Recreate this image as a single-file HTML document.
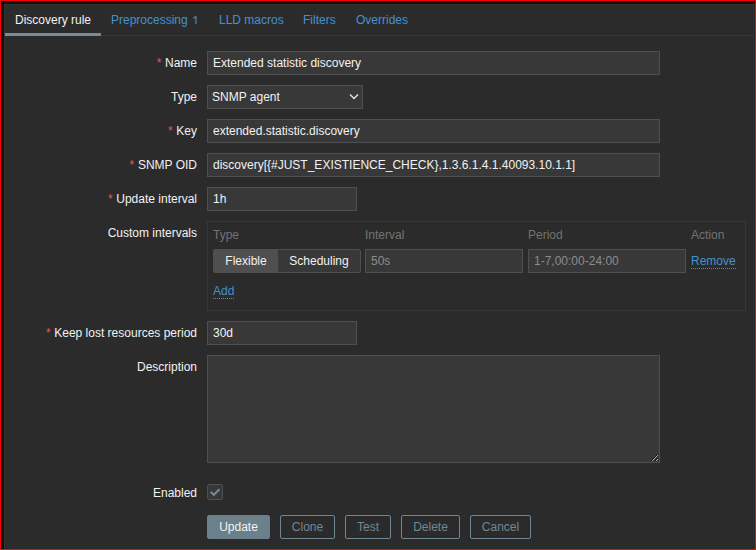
<!DOCTYPE html>
<html><head><meta charset="utf-8">
<style>
*{box-sizing:border-box}
html,body{margin:0;padding:0;width:756px;height:550px;overflow:hidden;background:#2b2b2b}
body{font-family:"Liberation Sans",sans-serif;font-size:12px;color:#f2f2f2;position:relative}
.a{position:absolute;white-space:nowrap}
.frame-r{position:absolute;left:0;top:0;width:756px;height:550px;border:1px solid #ff0000}
.lbl{position:absolute;right:559px;white-space:nowrap;line-height:14px}
.req::before{content:"*";color:#e45959;margin-right:3.6px;position:relative;top:0.4px}
.inp{position:absolute;left:207px;height:24px;background:#383838;border:1px solid #4f4f4f;padding:0 5px;line-height:22px;white-space:nowrap}
.tab{position:absolute;top:13px;line-height:14px;color:#4392cf}
.th{position:absolute;top:228px;line-height:14px;color:#737373}
.link{color:#4392cf;border-bottom:1px dotted #4392cf}
.btn{position:absolute;top:515px;height:24px;border:1px solid #6f8692;border-radius:2px;color:#718894;text-align:center;line-height:22px}
</style></head><body>
<div class="frame-r"></div>
<!-- top/left dark edges -->
<div class="a" style="left:1px;top:1px;width:754px;height:1px;background:#041214"></div>
<div class="a" style="left:1px;top:1px;width:1px;height:548px;background:#041214"></div>
<div class="a" style="left:2px;top:2px;width:753px;height:2px;background:#111"></div>
<div class="a" style="left:2px;top:2px;width:2px;height:547px;background:#111"></div>
<div class="a" style="left:4px;top:4px;width:751px;height:1px;background:#333"></div>
<div class="a" style="left:4px;top:4px;width:1px;height:545px;background:#333"></div>
<div class="a" style="left:754px;top:4px;width:1px;height:545px;background:#212e2e"></div>
<div class="a" style="left:4px;top:548px;width:751px;height:1px;background:#212e2e"></div>

<!-- tabs -->
<div class="a" style="left:5px;top:35px;width:749px;height:1px;background:#383838"></div>
<div class="a" style="left:5px;top:33px;width:96px;height:3px;background:#768d99"></div>
<div class="tab" style="left:15px;color:#f2f2f2">Discovery rule</div>
<div class="tab" style="left:111px">Preprocessing</div>
<svg class="a" style="left:192px;top:15px" width="6" height="10" viewBox="0 0 6 10"><path d="M3.9 1 V9" stroke="#5a86a8" stroke-width="1.2" fill="none"/><path d="M1.3 3.5 L3.9 1.3" stroke="#5a86a8" stroke-width="1.1" fill="none"/></svg>
<div class="tab" style="left:219px">LLD macros</div>
<div class="tab" style="left:303px">Filters</div>
<div class="tab" style="left:356px">Overrides</div>

<!-- rows -->
<div class="lbl req" style="top:56px">Name</div>
<div class="inp" style="top:51px;width:453px">Extended statistic discovery</div>

<div class="lbl" style="top:90px">Type</div>
<div class="inp" style="top:85px;width:156px;padding-left:4px">SNMP agent
<svg style="position:absolute;left:141px;top:7px" width="10" height="7" viewBox="0 0 10 7"><path d="M1 1.5 L5 5.5 L9 1.5" fill="none" stroke="#e6e6e6" stroke-width="1.35"/></svg></div>

<div class="lbl req" style="top:124px">Key</div>
<div class="inp" style="top:119px;width:453px">extended.statistic.discovery</div>

<div class="lbl req" style="top:158px">SNMP OID</div>
<div class="inp" style="top:153px;width:453px">discovery[{#JUST_EXISTIENCE_CHECK},1.3.6.1.4.1.40093.10.1.1]</div>

<div class="lbl req" style="top:192px">Update interval</div>
<div class="inp" style="top:187px;width:150px">1h</div>

<div class="lbl" style="top:226px">Custom intervals</div>
<div class="a" style="left:207px;top:221px;width:539px;height:90px;border:1px solid #383838"></div>
<div class="th" style="left:213px">Type</div>
<div class="th" style="left:365px">Interval</div>
<div class="th" style="left:528px">Period</div>
<div class="th" style="left:691px">Action</div>
<div class="a" style="left:213px;top:249px;width:148px;height:24px;border:1px solid #4f4f4f;border-radius:2px;background:#383838;overflow:hidden">
  <div class="a" style="left:0;top:0;width:64px;height:22px;background:#4f4f4f;text-align:center;line-height:22px">Flexible</div>
  <div class="a" style="left:64px;top:0;width:82px;height:22px;text-align:center;line-height:22px">Scheduling</div>
</div>
<div class="inp" style="left:365px;top:249px;width:158px;color:#8c8c8c">50s</div>
<div class="inp" style="left:528px;top:249px;width:158px;color:#8c8c8c">1-7,00:00-24:00</div>
<div class="a" style="left:691px;top:254px;line-height:14px"><span class="link">Remove</span></div>
<div class="a" style="left:213px;top:284px;line-height:14px"><span class="link">Add</span></div>

<div class="lbl req" style="top:326px">Keep lost resources period</div>
<div class="inp" style="top:321px;width:150px">30d</div>

<div class="lbl" style="top:360px">Description</div>
<textarea class="a" style="left:207px;top:355px;width:453px;height:108px;background:#383838;border:1px solid #4f4f4f;margin:0;resize:both"></textarea>

<div class="lbl" style="top:486px">Enabled</div>
<div class="a" style="left:207px;top:484px;width:16px;height:16px;border:1px solid #4f4f4f;border-radius:2px;background:#383838">
<svg style="position:absolute;left:2px;top:3px" width="11" height="9" viewBox="0 0 11 9"><path d="M0.7 3.9 L3.8 6.8 L9.5 1.3" fill="none" stroke="#768d99" stroke-width="2"/></svg></div>

<div class="btn" style="left:207px;width:63px;background:#6b808b;border-color:#6b808b;color:#f2f2f2">Update</div>
<div class="btn" style="left:280px;width:55px">Clone</div>
<div class="btn" style="left:345px;width:46px">Test</div>
<div class="btn" style="left:401px;width:59px">Delete</div>
<div class="btn" style="left:470px;width:61px">Cancel</div>
</body></html>
